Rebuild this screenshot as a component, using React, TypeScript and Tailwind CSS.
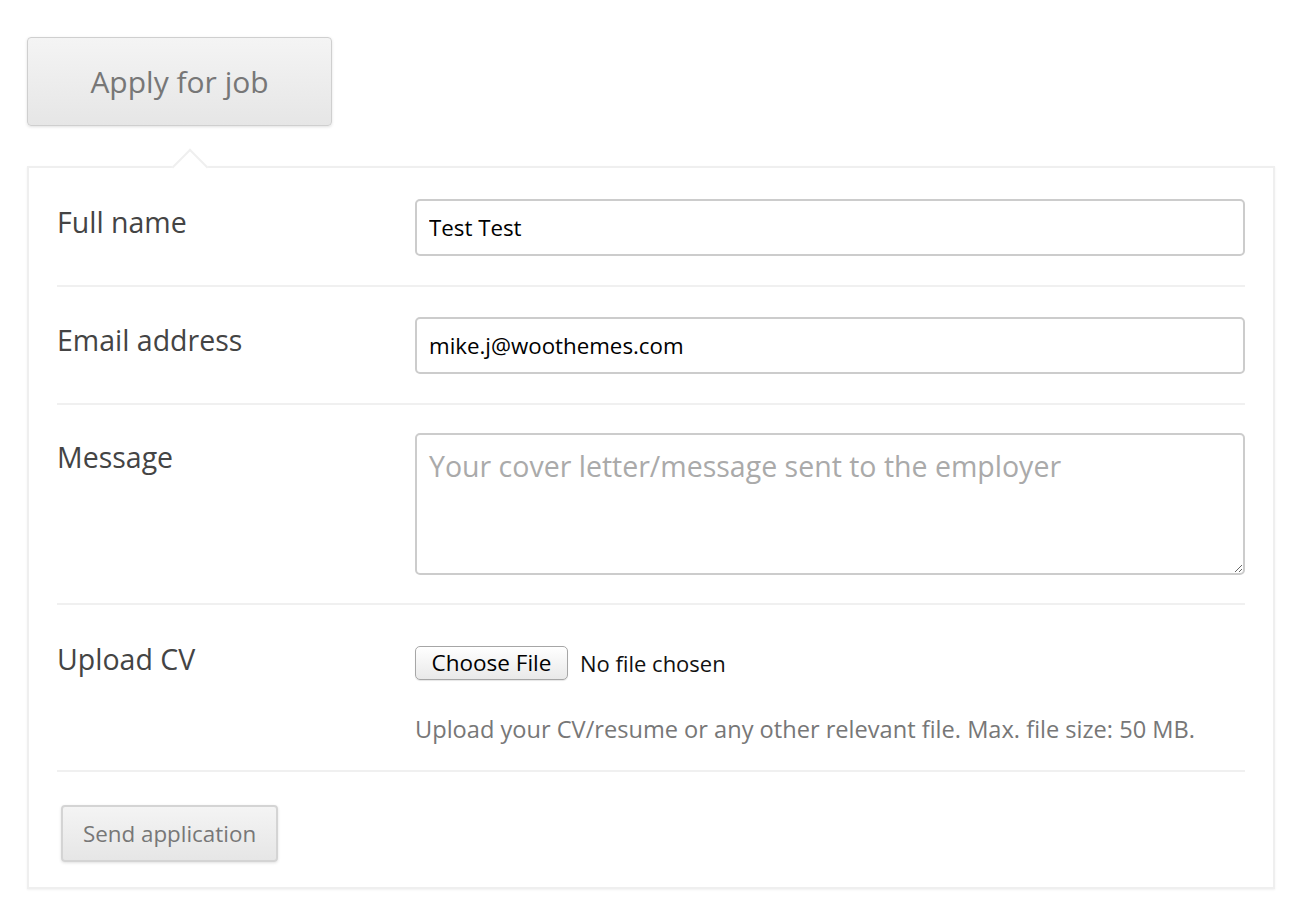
export default function App() {
  return (
    <div className="min-h-screen bg-white pl-[27px] pr-[31px] pt-[37px] font-['Open_Sans',sans-serif] text-[#444]">
      <button
        type="button"
        className="h-[89px] w-[305px] rounded-[4px] border border-[#cfcfcf] bg-gradient-to-b from-[#f4f4f4] to-[#e6e6e6] text-[30px] text-[#777] shadow-[0_1px_3px_rgba(0,0,0,0.12)]"
      >
        Apply for job
      </button>

      <div className="relative mt-[40px] border-2 border-[#efefef] bg-white px-[28px] shadow-[0_1px_2px_rgba(0,0,0,0.06)]">
        <div className="absolute -top-[14px] left-[148px] h-[26px] w-[26px] rotate-45 border-l-2 border-t-2 border-[#efefef] bg-white" />

        <form className="relative">
          <div className="grid grid-cols-[358px_1fr] border-b-2 border-[#f0f0f0] pt-[31px] pb-[29px]">
            <label className="pt-[3px] text-[28.5px] leading-[40px]">Full name</label>
            <input
              type="text"
              defaultValue="Test Test"
              className="h-[57px] rounded-[5px] border-2 border-[#cccccc] px-[12px] text-[22.3px] text-black outline-none"
            />
          </div>

          <div className="grid grid-cols-[358px_1fr] border-b-2 border-[#f0f0f0] pt-[30px] pb-[29px]">
            <label className="pt-[3px] text-[28.5px] leading-[40px]">Email address</label>
            <input
              type="email"
              defaultValue="mike.j@woothemes.com"
              className="h-[57px] rounded-[5px] border-2 border-[#cccccc] px-[12px] text-[22.3px] text-black outline-none"
            />
          </div>

          <div className="grid grid-cols-[358px_1fr] border-b-2 border-[#f0f0f0] pt-[28px] pb-[28px]">
            <label className="pt-[4px] text-[28.5px] leading-[40px]">Message</label>
            <textarea
              placeholder="Your cover letter/message sent to the employer"
              className="block h-[142px] rounded-[5px] border-2 border-[#cccccc] px-[12px] py-[11px] text-[28.5px] leading-[40px] text-black outline-none placeholder:text-[#aaaaaa]"
            />
          </div>

          <div className="grid grid-cols-[358px_1fr] border-b-2 border-[#f0f0f0] pt-[40px] pb-[26px]">
            <label className="-mt-[6px] text-[28.5px] leading-[40px]">Upload CV</label>
            <div>
              <div className="flex items-center gap-[12px] pt-[1px]">
                <span className="flex h-[34px] w-[153px] items-center justify-center rounded-[5px] border border-[#a6a6a6] bg-gradient-to-b from-[#ffffff] to-[#e9e9e9] text-[22.5px] text-black shadow-[0_1px_1px_rgba(0,0,0,0.1)]">
                  Choose File
                </span>
                <span className="text-[22px] text-[#111]">No file chosen</span>
              </div>
              <p className="mt-[34px] text-[23.6px] leading-[30px] text-[#777]">
                Upload your CV/resume or any other relevant file. Max. file size: 50 MB.
              </p>
            </div>
          </div>

          <div className="pt-[33px] pb-[25px] pl-[4px]">
            <button
              type="button"
              className="h-[57px] w-[217px] rounded-[4px] border-2 border-[#d4d4d4] bg-gradient-to-b from-[#f4f4f4] to-[#e6e6e6] text-[22.4px] text-[#777] shadow-[0_1px_3px_rgba(0,0,0,0.12)]"
            >
              Send application
            </button>
          </div>
        </form>
      </div>
    </div>
  );
}
